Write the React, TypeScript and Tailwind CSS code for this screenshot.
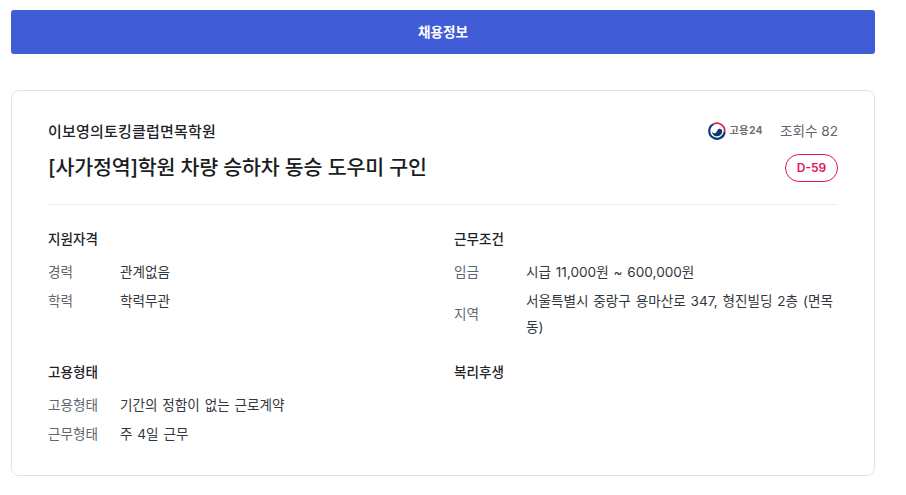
import React from 'react';

const font = { fontFamily: 'Inter, "Noto Sans CJK KR", sans-serif' };

const Row: React.FC<{ label: string; children: React.ReactNode }> = ({ label, children }) => (
  <div className="flex items-center py-[1.5px] text-[13.6px] leading-[26px] [word-spacing:1px]">
    <span className="w-[72px] shrink-0 text-[#5f6670]">{label}</span>
    <span className="text-[#33383f]">{children}</span>
  </div>
);

const SectionTitle: React.FC<{ children: React.ReactNode }> = ({ children }) => (
  <h3 className="mb-2 text-[13.6px] font-medium leading-5 text-[#1f2328]">{children}</h3>
);

const Taegeuk = () => (
  <svg width="18" height="18" viewBox="0 0 18 18" fill="none">
    <path d="M5 2.4 A7.7 7.7 0 1 0 16.6 10" stroke="#0b3a75" strokeWidth="2.2" />
    <path d="M5 2.4 A7.7 7.7 0 0 1 16.6 10" stroke="#d92a45" strokeWidth="1.8" />
    <path d="M3.8 9.6 A2.7 2.7 0 0 0 9 9 A2.7 2.7 0 0 1 14.2 8.6 A5.2 5.2 0 0 1 3.8 9.6 Z" fill="#0b3a75" />
  </svg>
);

export default function App() {
  return (
    <div className="min-h-[495px] bg-white pl-[11px] pr-[31px] pt-[10px]" style={font}>
      <button className="h-11 w-full rounded-[3px] bg-[#405cd6] text-[13.6px] font-bold text-white">채용정보</button>

      <section className="mt-9 h-[386px] rounded-[8px] border border-[#dfe1e4] px-9 pt-[31px]">
        <div className="flex justify-between border-b border-[#eceef0] pb-5">
          <div>
            <p className="text-[15px] font-medium leading-5 tracking-[0.2px] text-[#1f2328]">이보영의토킹클럽면목학원</p>
            <h2 className="mt-[10px] text-[20.6px] font-medium leading-[32px] tracking-[-0.2px] text-[#1a1d21]">[사가정역]학원 차량 승하차 동승 도우미 구인</h2>
          </div>
          <div className="-mt-px flex flex-col items-end">
            <div className="flex h-5 items-center text-[13.6px] text-[#5f6670]">
              <Taegeuk />
              <span className="ml-[3px] mr-[17px] text-[10.4px] font-bold tracking-[0.3px] text-[#6b7077]">고용24</span>
              <span>조회수 82</span>
            </div>
            <span className="mt-[13px] flex h-7 w-[53px] items-center justify-center rounded-full border border-[#e0125f] text-[12px] font-semibold text-[#e0125f]">D-59</span>
          </div>
        </div>

        <div className="grid grid-cols-[384px_384px] gap-x-[22px] pt-6">
          <div className="h-[133px]">
            <SectionTitle>지원자격</SectionTitle>
            <Row label="경력">관계없음</Row>
            <Row label="학력">학력무관</Row>
          </div>
          <div className="h-[133px]">
            <SectionTitle>근무조건</SectionTitle>
            <Row label="임금">시급 11,000원 ~ 600,000원</Row>
            <Row label="지역">서울특별시 중랑구 용마산로 347, 형진빌딩 2층 (면목동)</Row>
          </div>
          <div>
            <SectionTitle>고용형태</SectionTitle>
            <Row label="고용형태">기간의 정함이 없는 근로계약</Row>
            <Row label="근무형태">주 4일 근무</Row>
          </div>
          <div>
            <SectionTitle>복리후생</SectionTitle>
          </div>
        </div>
      </section>
    </div>
  );
}
